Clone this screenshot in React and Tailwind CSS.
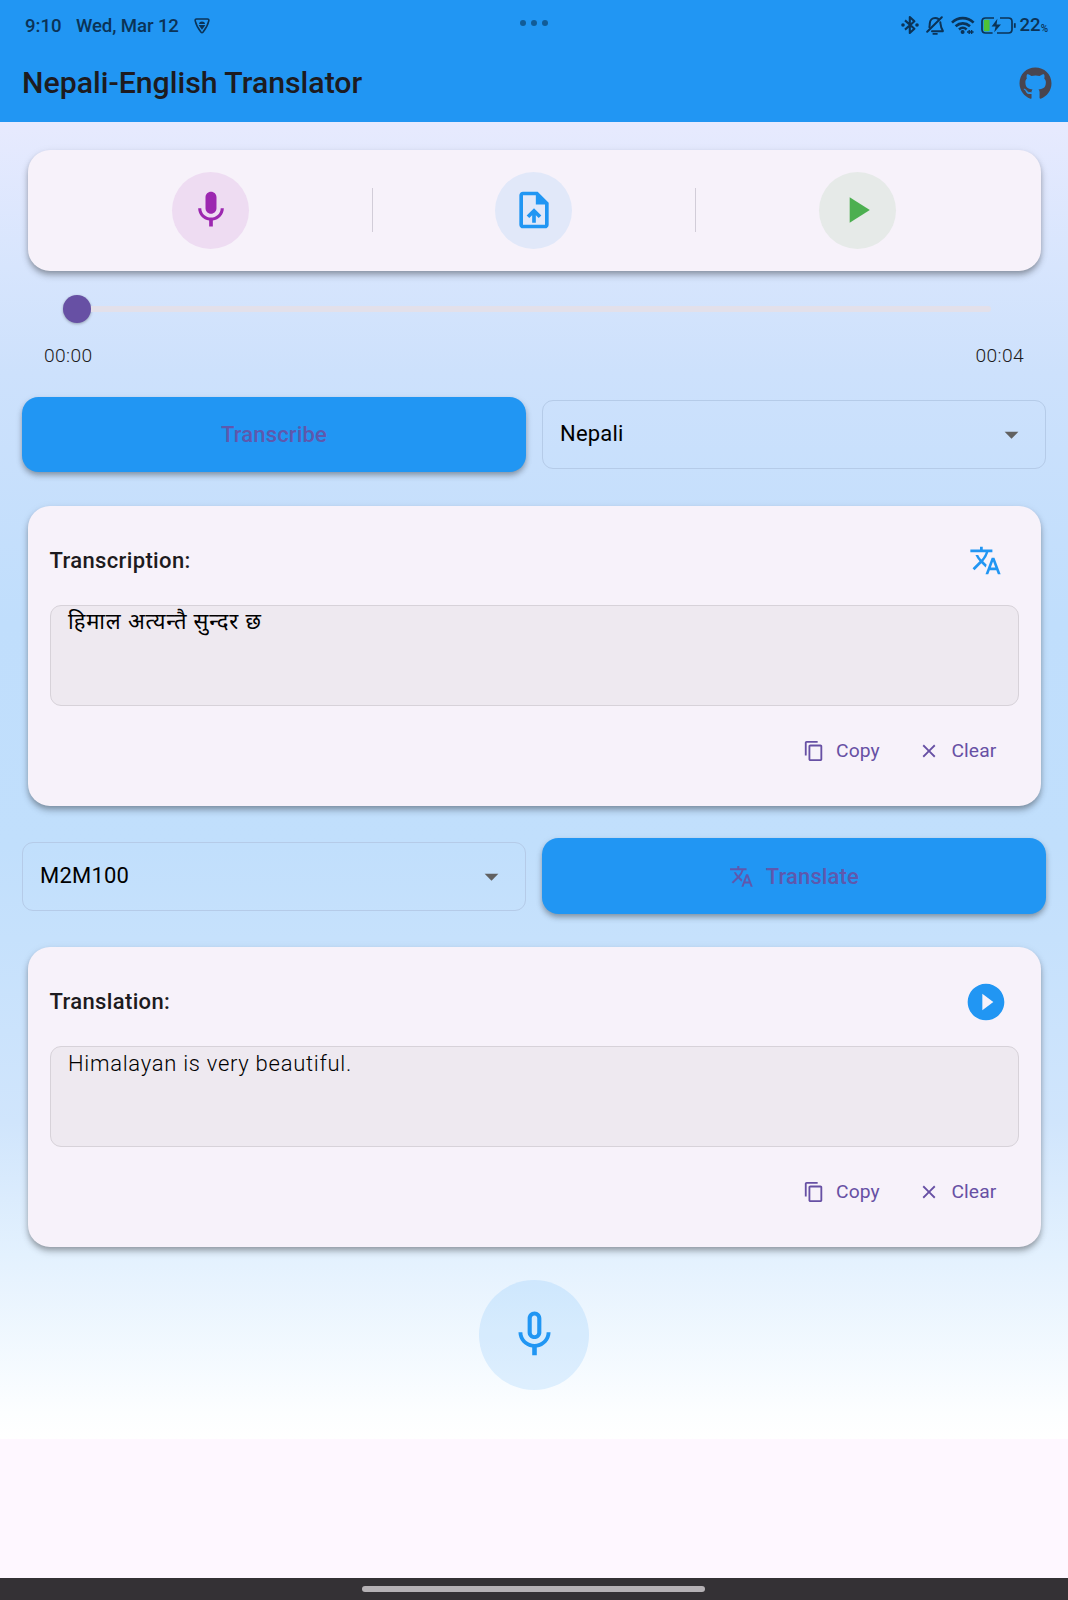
import {
  MdArrowDropDown,
  MdClear,
  MdContentCopy,
  MdMic,
  MdMicNone,
  MdPlayArrow,
  MdPlayCircleFilled,
  MdTranslate,
  MdUploadFile,
} from "react-icons/md";
import { FaGithub } from "react-icons/fa";

const elevation =
  "shadow-[0_3px_5.5px_-1.4px_rgba(0,0,0,0.2),0_5px_7px_0_rgba(0,0,0,0.17),0_2px_10px_0_rgba(0,0,0,0.08)]";
const buttonElevation =
  "shadow-[0_3px_5px_-1.4px_rgba(0,0,0,0.2),0_4px_6px_0_rgba(0,0,0,0.15),0_2px_8px_0_rgba(0,0,0,0.07)]";

function ShieldIcon() {
  return (
    <svg width="16" height="16" viewBox="0 0 16 16" fill="none" stroke="currentColor" strokeWidth="1.6" strokeLinejoin="round">
      <path d="M1.2 2.8C.9 1.6 1.4 1 2.6 1H13.4C14.6 1 15.1 1.6 14.8 2.8C13.9 6.9 11.6 10.8 8.9 14.2Q8 15.2 7.1 14.2C4.4 10.8 2.1 6.9 1.2 2.8Z" />
      <path d="M5 6C5.3 4 6.3 3.4 8 3.4S10.7 4 11 6Z" fill="currentColor" stroke="none" />
      <path d="M4.6 6.9H11.4L8 11.8Z" fill="currentColor" stroke="none" />
    </svg>
  );
}

function BluetoothIcon() {
  return (
    <svg width="18" height="20" viewBox="0 0 18 20" fill="none" stroke="currentColor" strokeWidth="2.1">
      <path d="M4 5.4L13.4 13.8L8.8 18V2L13.4 6.2L4 14.6" strokeLinejoin="round" />
      <circle cx="2" cy="10" r="1.8" fill="currentColor" stroke="none" />
      <circle cx="16" cy="10" r="1.8" fill="currentColor" stroke="none" />
    </svg>
  );
}

function BellOffIcon() {
  return (
    <svg width="18" height="19" viewBox="0 0 18 19" fill="none" stroke="currentColor" strokeWidth="2" strokeLinecap="round">
      <path d="M15.8 1.2L1.2 15.8" />
      <path d="M3.4 11.2C3.7 9.8 3.7 8.7 3.8 7.3C4 4.2 6.2 2 9.2 2C10.4 2 11.4 2.3 12.2 2.9" />
      <path d="M14.3 6.2C14.7 9.3 14.8 12 16.8 14.6C17 15 16.8 15.2 16.4 15.2H6" />
      <path d="M7.2 17.9H11" strokeWidth="1.6" />
    </svg>
  );
}

function WifiIcon() {
  return (
    <svg width="24" height="19" viewBox="0 0 24 19" fill="none" stroke="currentColor" strokeWidth="2.6">
      <path d="M1 6.6C7 .6 16.4 .6 22.6 6.6" />
      <path d="M4.6 10.2C8.8 6.4 14.8 6.4 19 10.2" />
      <path d="M8 13.4C10.3 11.4 13.3 11.4 15.6 13.4" />
      <circle cx="11.6" cy="16" r="2" fill="currentColor" stroke="none" />
      <path d="M16 16H22.6M18.2 14V18M20.6 14V18" strokeWidth="1.4" />
    </svg>
  );
}

function BatteryIcon() {
  return (
    <svg width="35" height="17" viewBox="0 0 35 17" fill="none">
      <rect x="2.8" y="2.8" width="5.8" height="11.4" rx="1" fill="#4fc234" />
      <path d="M13 1H4.6Q1 1 1 4.4V12.6Q1 16 4.6 16H11.6M19 1H27.4Q31 1 31 4.4V12.6Q31 16 27.4 16H16" stroke="currentColor" strokeWidth="1.7" />
      <path d="M16.4 1.8L10.6 9.4H14.6L13.2 15.2L20 7.4H15.6Z" fill="currentColor" />
      <path d="M33.8 6.2V10.8" stroke="currentColor" strokeWidth="1.8" />
    </svg>
  );
}

function StatusBar() {
  return (
    <div className="grid h-[50px] grid-cols-[1fr_28px_1fr] pl-[25px] pr-[20px] text-[#0b3357]">
      <div className="flex h-full items-center text-[18.6px] font-medium">
        <span className="w-[51px] pt-[3px]">9:10</span>
        <span className="w-[118px] whitespace-nowrap pt-[3px] tracking-[-0.1px]">Wed, Mar 12</span>
        <span className="pt-[1px]"><ShieldIcon /></span>
      </div>
      <div className="-ml-[3px] flex gap-[5px] pt-[19.5px] text-[#115c98]">
        <span className="size-[6px] rounded-full bg-current" />
        <span className="size-[6px] rounded-full bg-current" />
        <span className="size-[6px] rounded-full bg-current" />
      </div>
      <div className="flex h-full items-center justify-end">
        <span className="mr-[7px]"><BluetoothIcon /></span>
        <span className="mr-[7px]"><BellOffIcon /></span>
        <span className="mr-[6px]"><WifiIcon /></span>
        <span className="mr-[3px]"><BatteryIcon /></span>
        <span className="pt-[2px] text-[18.6px] font-medium">22</span>
        <span className="pt-[7px] text-[10px] font-medium">%</span>
      </div>
    </div>
  );
}

function RoundAction({ tint, children }) {
  return (
    <div className="flex flex-1 justify-center">
      <button className={`flex size-[77px] items-center justify-center rounded-full ${tint}`}>{children}</button>
    </div>
  );
}

function Divider() {
  return <div className="h-[44px] w-px bg-[#d2cdd8]" />;
}

function Select({ value }) {
  return (
    <div className="flex h-[69px] items-center justify-between rounded-[11px] border border-[#b5cbe8] px-[17px] text-[22px] text-black">
      <span className="-mt-[2px] tracking-[0.2px]">{value}</span>
      <MdArrowDropDown size={33} className="text-[#616161]" />
    </div>
  );
}

function PrimaryButton({ icon, label }) {
  return (
    <button className={`flex h-[75.6px] items-center justify-center gap-[12px] rounded-[16.5px] bg-[#2196f3] text-[22px] font-medium tracking-[0.14px] text-[#6750a4]/90 ${buttonElevation}`}>
      {icon}
      <span>{label}</span>
    </button>
  );
}

function ResultCard({ title, icon, textClass, text }) {
  return (
    <section className={`mx-[27.5px] h-[300px] rounded-[22px] bg-[#f7f2fa] px-[22px] pt-[22px] ${elevation}`}>
      <div className="flex h-[66px] items-center justify-between">
        <h2 className="text-[22px] font-medium tracking-[0.36px] text-[#1d1b20]">{title}</h2>
        <div className="flex w-[66px] justify-center text-[#2196f3]">{icon}</div>
      </div>
      <div className="mt-[11px] h-[101px] rounded-[11px] border border-[#d7d2d9] bg-[#eee9f0] px-[17.5px]">
        <p className={textClass}>{text}</p>
      </div>
      <div className="mt-[31px] flex items-center justify-end pr-[22px] text-[19.25px] tracking-[0.14px] text-[#6750a4]">
        <button className="flex items-center gap-[11px]">
          <MdContentCopy size={22} />
          <span>Copy</span>
        </button>
        <button className="ml-[38.5px] flex items-center gap-[11px]">
          <MdClear size={22} />
          <span>Clear</span>
        </button>
      </div>
    </section>
  );
}

export default function App() {
  return (
    <div className="flex h-[1600px] w-[1068px] flex-col overflow-hidden bg-[#fef7ff] font-['Roboto','Noto_Sans',sans-serif]">
      <header className="h-[122px] bg-[#2196f3]">
        <StatusBar />
        <div className="flex h-[67px] items-center justify-between pl-[22px] pr-[16.5px]">
          <h1 className="-mt-[1px] text-[30.25px] font-medium text-[#1d1b20]">Nepali-English Translator</h1>
          <FaGithub size={33} className="text-[#49454f]" />
        </div>
      </header>

      <main className="h-[1317px] bg-[linear-gradient(to_bottom,#e7eafe_0%,#d7e5fd_11%,#cde1fc_19%,#c0defc_38%,#c1dffc_55%,#d0e5fc_76%,#e3f1fe_86%,#fcfeff_98%,#ffffff_100%)] pt-[27.6px]">
        <section className={`mx-[27.5px] flex h-[121px] items-center rounded-[22px] bg-[#f7f2fa] px-[22px] ${elevation}`}>
          <RoundAction tint="bg-[#eedcf2]">
            <MdMic size={44} className="text-[#9c27b0]" />
          </RoundAction>
          <Divider />
          <RoundAction tint="bg-[#e1e8f9]">
            <MdUploadFile size={44} className="text-[#2196f3]" />
          </RoundAction>
          <Divider />
          <RoundAction tint="bg-[#e6eae8]">
            <MdPlayArrow size={44} className="text-[#4caf50]" />
          </RoundAction>
        </section>

        <div className="mx-[63px] mt-[25px] flex h-[27px] items-center">
          <span className="size-[27.5px] shrink-0 rounded-full bg-[#6750a4] shadow-[0_1px_3px_rgba(0,0,0,0.3)]" />
          <span className="mr-[14px] h-[6px] flex-1 rounded-r-full bg-[#e3e0ea]" />
        </div>
        <div className="mx-[44px] mt-[20px] flex h-[28px] items-center justify-between text-[19.25px] font-light tracking-[0.34px] text-[#1d1b20]">
          <span>00:00</span>
          <span>00:04</span>
        </div>

        <div className="mx-[22px] mt-[26px] grid h-[76px] grid-cols-2 items-center gap-4">
          <PrimaryButton label="Transcribe" />
          <Select value="Nepali" />
        </div>

        <div className="mt-[33px]">
          <ResultCard
            title="Transcription:"
            icon={<MdTranslate size={33} />}
            text="हिमाल अत्यन्तै सुन्दर छ"
            textClass="text-[22px] leading-[32px] tracking-[0.82px] text-black"
          />
        </div>

        <div className="mx-[22px] mt-[32.5px] grid h-[76px] grid-cols-2 items-center gap-4">
          <Select value="M2M100" />
          <PrimaryButton icon={<MdTranslate size={24.75} />} label="Translate" />
        </div>

        <div className="mt-[32.5px]">
          <ResultCard
            title="Translation:"
            icon={<MdPlayCircleFilled size={44} />}
            text="Himalayan is very beautiful."
            textClass="pt-[1px] text-[22px] font-light leading-[32px] tracking-[0.72px] text-black"
          />
        </div>

        <div className="mt-[33px] flex justify-center">
          <button className="flex size-[110px] items-center justify-center rounded-full bg-[#2196f3]/12">
            <MdMicNone size={55} className="text-[#2196f3]" />
          </button>
        </div>
      </main>

      <footer className="mt-auto flex h-[22px] justify-center bg-[#343135] pt-[8px]">
        <span className="mr-px h-[6px] w-[343px] rounded-full bg-[#b5b1b5]" />
      </footer>
    </div>
  );
}
